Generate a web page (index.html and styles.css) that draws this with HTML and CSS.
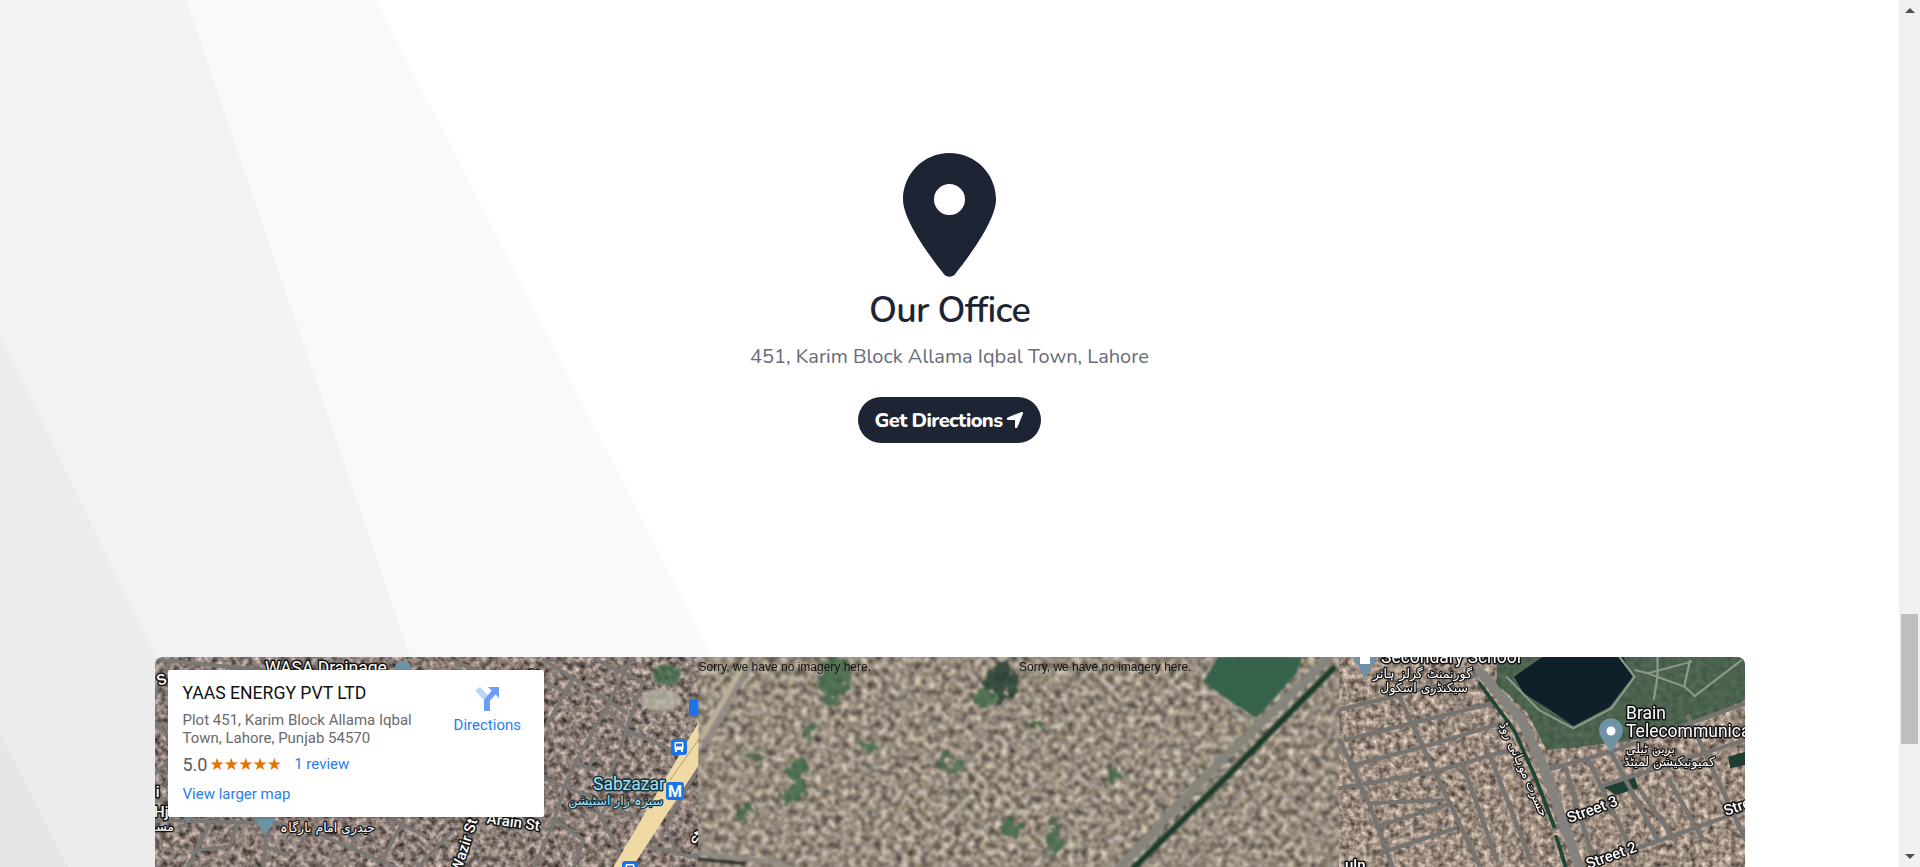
FILE: index.html
```html
<!DOCTYPE html>
<html lang="en">
<head>
<meta charset="utf-8">
<title>Our Office</title>
<link rel="stylesheet" href="styles.css">
</head>
<body>
<div class="window">
  <main class="page">
    <svg class="stripes" viewBox="0 0 1899 867" aria-hidden="true">
      <polygon class="s1" points="0,0 376,0 820,867 0,867"/>
      <polygon class="s2" points="0,0 186,0 482,867 0,867"/>
      <polygon class="s3" points="0,335 257,867 0,867"/>
      <polygon class="s4" points="0,733 68,867 0,867"/>
    </svg>

    <section class="office">
      <svg class="pin" viewBox="0 0 384 512" aria-hidden="true"><path d="M215.7 499.2C267 435 384 279.4 384 192C384 86 298 0 192 0S0 86 0 192c0 87.4 117 243 168.3 307.2c12.3 15.3 35.1 15.3 47.4 0zM192 128a64 64 0 1 1 0 128 64 64 0 1 1 0-128z"/></svg>
      <h2 class="title">Our Office</h2>
      <p class="address">451, Karim Block Allama Iqbal Town, Lahore</p>
      <a class="btn" href="#">Get Directions
        <svg class="btn-icon" viewBox="0 0 448 512" aria-hidden="true"><path d="M429.6 92.1c4.9-11.9 2.1-25.6-7-34.7s-22.8-11.9-34.7-7l-352 144c-14.2 5.8-22.2 20.8-19.3 35.8s16.1 25.8 31.4 25.8H224V432c0 15.3 10.8 28.4 25.8 31.4s30-5.1 35.8-19.3l144-352z"/></svg>
      </a>
    </section>

    <section class="map">
      <svg class="map-art" viewBox="0 0 1590 211" aria-label="Satellite map">
        <defs>
          <filter id="texLeft" x="0" y="0" width="100%" height="100%" color-interpolation-filters="sRGB">
            <feTurbulence type="fractalNoise" baseFrequency="0.16" numOctaves="3" seed="7"/>
            <feColorMatrix values="0.95 0 0 0 0.07  0.88 0 0 0 0.05  0.84 0.05 0 0 0.02  0 0 0 0 1"/>
            <feGaussianBlur stdDeviation="0.6"/>
          </filter>
          <filter id="texMid" x="0" y="0" width="100%" height="100%" color-interpolation-filters="sRGB">
            <feTurbulence type="fractalNoise" baseFrequency="0.15" numOctaves="3" seed="21"/>
            <feColorMatrix values="0.9 0 0.1 0 0.09  0.85 0 0.05 0 0.1  0.8 0 -0.05 0 0.12  0 0 0 0 1"/>
            <feGaussianBlur stdDeviation="0.8"/>
          </filter>
          <filter id="texRight" x="0" y="0" width="100%" height="100%" color-interpolation-filters="sRGB">
            <feTurbulence type="fractalNoise" baseFrequency="0.17" numOctaves="3" seed="33"/>
            <feColorMatrix values="0.92 0 0 0 0.15  0.86 0 0 0 0.12  0.8 0.04 0 0 0.08  0 0 0 0 1"/>
            <feGaussianBlur stdDeviation="0.6"/>
          </filter>
          <filter id="soft" x="-40%" y="-40%" width="180%" height="180%"><feGaussianBlur stdDeviation="3"/></filter>
          <filter id="softer" x="-30%" y="-30%" width="160%" height="160%"><feGaussianBlur stdDeviation="0.8"/></filter>
          <filter id="foliage" x="-20%" y="-20%" width="140%" height="140%" color-interpolation-filters="sRGB">
            <feTurbulence type="fractalNoise" baseFrequency="0.09" numOctaves="3" seed="5" result="n"/>
            <feDisplacementMap in="SourceGraphic" in2="n" scale="26" xChannelSelector="R" yChannelSelector="G"/>
            <feGaussianBlur stdDeviation="1.2"/>
          </filter>
        </defs>

        <svg x="0" y="0" width="544" height="211" viewBox="0 0 544 211">
          <rect width="544" height="211" filter="url(#texLeft)"/>
          <g class="patch" filter="url(#soft)" transform="translate(285,-6) scale(.3333)">
            <ellipse class="p-green" cx="680" cy="75" rx="42" ry="32"/>
            <ellipse class="p-pale" cx="665" cy="150" rx="60" ry="34"/>
          </g>
          <g class="road" transform="translate(285,-6) scale(.3333)">
            <polyline points="310,30 400,85 500,150 560,190"/>
            <polyline points="470,30 610,95 560,235"/>
            <polyline points="400,85 320,225"/>
            <polyline points="575,25 500,170 405,340 370,420 340,520 280,655"/>
            <polyline points="500,180 560,240 695,300"/>
            <polyline points="560,240 510,375"/>
            <polyline points="405,340 465,360"/>
            <polyline points="470,290 448,350"/>
            <polyline points="310,385 450,440 520,570 548,625"/>
            <polyline points="340,505 430,570 400,655"/>
            <polyline points="680,530 710,610"/>
            <polyline points="630,590 780,625"/>
            <polyline points="320,100 385,130"/>
            <polyline points="450,440 585,500"/>
            <polyline points="780,345 680,520"/>
          </g>
          <g class="road" transform="translate(-5,134) scale(.3333)">
            <polyline points="0,90 390,100 500,130 745,235"/>
            <polyline points="180,100 110,235"/>
            <polyline points="350,120 340,235"/>
            <polyline points="345,170 415,195"/>
            <polyline points="262,100 240,170 140,180"/>
            <polyline points="750,110 695,215"/>
            <polyline points="620,130 600,175"/>
            <polyline points="730,90 830,140"/>
            <polyline points="800,235 900,130"/>
          </g>
          <g class="road" transform="translate(-15,-16) scale(.3333)">
            <polyline points="60,60 370,90"/>
            <polyline points="45,160 90,60"/>
            <polyline points="50,250 90,300"/>
            <polyline points="45,400 90,360"/>
            <polyline points="950,70 1000,85"/>
          </g>
          <polygon class="highway" transform="translate(285,-6) scale(.3333)" points="780,210 780,340 575,655 518,655"/>
          <line class="road-thin" transform="translate(285,-6) scale(.3333)" x1="775" y1="270" x2="690" y2="390"/>

          <g class="poi">
            <rect x="516" y="83" width="16" height="16" rx="3"/>
            <rect x="534" y="43" width="14" height="17" rx="3"/>
            <rect x="467" y="205" width="16" height="16" rx="3"/>
            <rect x="511" y="126" width="18" height="18" rx="3"/>
          </g>
          <g class="bus">
            <rect x="519.5" y="86" width="9" height="8" rx="1.5"/>
            <rect x="520" y="94" width="2" height="2"/>
            <rect x="526" y="94" width="2" height="2"/>
            <rect x="470.5" y="208" width="9" height="8" rx="1.5"/>
          </g>
          <rect class="bus-window" x="521" y="87.5" width="6" height="3"/>
          <rect class="bus-window" x="472" y="209.5" width="6" height="2"/>
          <text class="poi-m" x="520" y="141">M</text>

          <path class="mini-pin" d="M110 179l-9-14a11 11 0 1 1 18 0z"/>
          <path class="mini-pin" d="M33 167l-6-10h12z"/>
          <circle class="mini-pin" cx="248" cy="14" r="9"/>

          <text class="lbl" x="110" y="18">WASA Drainage</text>
          <text class="lbl lbl-blue" x="438" y="134">Sabzazar</text>
          <text class="lbl lbl-ar lbl-blue" x="508" y="149" text-anchor="end">سبزہ زار اسٹیشن</text>
          <text class="lbl lbl-road" transform="translate(357.6,171) rotate(8)" text-anchor="middle">Arain St</text>
          <text class="lbl lbl-road" transform="translate(314,191) rotate(-72)" text-anchor="middle">Wazir St</text>
          <text class="lbl lbl-ar" x="220" y="176" text-anchor="end">حیدری امام بارگاہ</text>
          <text class="lbl lbl-road" x="-3" y="141">li</text>
          <text class="lbl lbl-road" x="-1" y="161">Hj</text>
          <text class="lbl lbl-ar" x="19" y="175" text-anchor="end">مسجد</text>
          <text class="lbl lbl-road" transform="translate(4,30) rotate(-20)">S</text>
          <text class="lbl lbl-road" transform="translate(370,17) rotate(50)">d</text>
          <text class="lbl lbl-road" transform="translate(546,190) rotate(-75)">St</text>
        </svg>

        <svg x="543" y="0" width="642" height="211" viewBox="543 0 642 211">
          <rect x="543" width="642" height="211" filter="url(#texMid)"/>
          <g class="veg" filter="url(#foliage)">
            <g transform="translate(405,-16) scale(.3827,.3333)">
              <ellipse class="p-green" cx="715" cy="115" rx="40" ry="70"/>
              <ellipse class="p-green" cx="620" cy="410" rx="22" ry="60"/>
              <ellipse class="p-green" cx="610" cy="470" rx="26" ry="26"/>
              <ellipse class="p-dark" cx="1150" cy="130" rx="38" ry="60"/>
              <ellipse class="p-green" cx="1105" cy="175" rx="26" ry="22"/>
              <ellipse class="p-green" cx="1180" cy="565" rx="22" ry="40"/>
              <ellipse class="p-green" cx="1000" cy="365" rx="20" ry="34"/>
              <ellipse class="p-green" cx="510" cy="350" rx="26" ry="15"/>
              <ellipse class="p-green" cx="800" cy="320" rx="20" ry="14"/>
              <ellipse class="p-green" cx="650" cy="270" rx="18" ry="18"/>
              <ellipse class="p-green" cx="1240" cy="265" rx="22" ry="14"/>
              <ellipse class="p-green" cx="1450" cy="410" rx="24" ry="22"/>
              <ellipse class="p-green" cx="1290" cy="590" rx="16" ry="70"/>
              <ellipse class="p-green" cx="1040" cy="385" rx="14" ry="16"/>
              <ellipse class="p-green" cx="480" cy="515" rx="20" ry="14"/>
            </g>
          </g>
          <g filter="url(#softer)">
            <polyline class="road-mid" transform="translate(405,-16) scale(.3827,.3333)" points="515,50 440,180 375,320"/>
            <polyline class="road-rail" transform="translate(405,-16) scale(.3827,.3333)" points="490,55 405,225 370,295"/>
            <polyline class="road-mid thin" transform="translate(405,-16) scale(.3827,.3333)" points="1160,190 1080,340 1000,470"/>
            <polyline class="road-mid thin" transform="translate(405,-16) scale(.3827,.3333)" points="950,70 880,190 820,290"/>
            <polyline class="road-mid" transform="translate(405,-16) scale(.3827,.3333)" points="365,640 560,665 620,690"/>
            <polyline class="road-black" transform="translate(405,-16) scale(.3827,.3333)" points="340,655 480,670"/>
            <polygon class="pond" transform="translate(845,-6) scale(.3333)" points="610,95 655,20 905,20 890,70 770,205 700,160"/>
            <polyline class="road-mid wide" transform="translate(845,-6) scale(.3333)" points="360,650 650,345 985,25"/>
            <polyline class="road-dark" transform="translate(845,-6) scale(.3333)" points="400,655 690,370 1000,55"/>
          </g>
          <text class="sorry" x="543.5" y="15">Sorry, we have no imagery here.</text>
          <text class="sorry" x="864" y="15">Sorry, we have no imagery here.</text>
        </svg>

        <svg x="1184" y="0" width="406" height="211" viewBox="1184 0 406 211">
          <rect x="1184" width="406" height="211" filter="url(#texRight)"/>
          <g transform="translate(1005,-16) scale(.3827,.3333)">
            <polygon class="park" points="880,50 1530,50 1530,180 1300,290 1100,320 1010,330 960,220 880,130"/>
            <polygon class="lake" points="925,110 1000,50 1210,50 1235,110 1175,200 1080,258 1020,210 950,160"/>
            <g class="path-light">
              <polyline points="905,110 990,210 1080,265 1180,205 1240,110 1200,50"/>
              <polyline points="1240,90 1275,100 1390,65"/>
              <polyline points="1275,100 1370,140 1400,170"/>
              <polyline points="1385,60 1370,140"/>
              <polyline points="1300,50 1300,110 1290,180"/>
              <polyline points="1395,170 1520,60"/>
            </g>
            <polygon class="p-dark" points="1155,435 1240,410 1250,445 1190,465"/>
            <polygon class="p-dark" points="1485,350 1530,335 1530,375 1490,385"/>
            <g class="road wide-road">
              <polyline points="467,210 850,100"/>
              <polyline points="485,300 690,240 870,190"/>
              <polyline points="510,375 720,310 890,250"/>
              <polyline points="467,445 720,395 910,330"/>
              <polyline points="550,490 740,480"/>
              <polyline points="565,560 760,490"/>
              <polyline points="575,640 770,565"/>
              <polyline points="625,170 720,400 840,690"/>
              <polyline points="470,300 550,500 610,690"/>
              <polyline points="790,370 880,660"/>
              <polyline points="860,340 970,665"/>
              <polyline points="1000,395 1190,330 1530,190"/>
              <polyline points="1060,385 1130,650"/>
              <polyline points="1120,360 1240,650"/>
              <polyline points="1180,340 1300,600"/>
              <polyline points="1260,460 1340,590"/>
              <polyline points="1330,420 1420,600"/>
              <polyline points="1380,230 1530,600"/>
              <polyline points="1150,440 1530,300"/>
              <polyline points="1030,565 1160,510"/>
              <polyline points="1260,620 1530,510"/>
              <polyline points="1110,670 1260,620"/>
            </g>
            <polyline class="road-main" points="835,95 945,240 1005,390 1095,680"/>
            <polyline class="road-green" points="835,130 925,270 980,410 1030,560"/>
            <polyline class="road-green" points="1035,590 1060,680"/>
          </g>

          <path class="mini-pin" d="M1210 22l-10-17a12 12 0 1 1 20 0z"/>
          <rect class="mini-white" x="1205" y="1" width="10" height="7"/>
          <path class="mini-pin" d="M1456 96l-10-15a12 12 0 1 1 20 0z"/>
          <circle class="mini-white" cx="1456" cy="75" r="4.5"/>

          <text class="lbl" x="1226" y="7">Secondary School</text>
          <text class="lbl lbl-ar" x="1317" y="22" text-anchor="end">گورنمنٹ گرلز ہائر</text>
          <text class="lbl lbl-ar" x="1313" y="36" text-anchor="end">سیکنڈری اسکول</text>
          <text class="lbl" x="1471" y="63">Brain</text>
          <text class="lbl" x="1471" y="81">Telecommunications</text>
          <text class="lbl lbl-ar" x="1520" y="97" text-anchor="end">برین ٹیلی</text>
          <text class="lbl lbl-ar" x="1560" y="110" text-anchor="end">کمیونیکیشن لمیٹڈ</text>
          <text class="lbl lbl-ar" transform="translate(1365,115) rotate(66)" text-anchor="middle">حسرت موہانی روڈ</text>
          <text class="lbl lbl-road" transform="translate(1439,158) rotate(-20)" text-anchor="middle">Street 3</text>
          <text class="lbl lbl-road" transform="translate(1458,204) rotate(-20)" text-anchor="middle">Street 2</text>
          <text class="lbl lbl-road" transform="translate(1571,160) rotate(-20)">Street</text>
          <text class="lbl lbl-road" x="1190" y="214">uln</text>
        </svg>
      </svg>

      <aside class="place-card">
        <div class="place-main">
          <div class="place-name">YAAS ENERGY PVT LTD</div>
          <div class="place-addr">Plot 451, Karim Block Allama Iqbal Town, Lahore, Punjab 54570</div>
          <div class="place-rating">
            <span class="score">5.0</span>
            <span class="stars">★★★★★</span>
            <a class="link review" href="#">1 review</a>
          </div>
          <a class="link larger" href="#">View larger map</a>
        </div>
        <a class="dir" href="#">
          <svg class="dir-icon" viewBox="0 0 24 24" aria-hidden="true">
            <polygon class="dir-light" points="0,3.5 5,0 13,8.5 9,13"/>
            <polygon class="dir-dark" points="13,0 24,0 24,11 20.6,7.6 15,13.5 15,24 9,24 9,13 16.6,3.6"/>
          </svg>
          <span class="link">Directions</span>
        </a>
      </aside>
    </section>
  </main>

  <div class="scrollbar" aria-hidden="true">
    <div class="sb-btn"><span class="arrow-up"></span></div>
    <div class="sb-thumb"></div>
    <div class="sb-fill"></div>
    <div class="sb-btn"><span class="arrow-down"></span></div>
  </div>
</div>
</body>
</html>
```
FILE: styles.css
```css
* { box-sizing: border-box; }
html, body { margin: 0; height: 867px; overflow: hidden; background: #fff; }

.window { display: flex; height: 867px; }
.page {
  position: relative;
  flex: 1;
  min-width: 0;
  overflow: hidden;
  background: #fff;
  font-family: "Nunito", "Lato", sans-serif;
}

.stripes { position: absolute; inset: 0; width: 1899px; height: 867px; }
.s1 { fill: #f9f9f9; }
.s2 { fill: #f2f2f2; }
.s3 { fill: #ececec; }
.s4 { fill: #e6e6e6; }

.office {
  position: relative;
  display: flex;
  flex-direction: column;
  align-items: center;
  padding-top: 153px;
}
.pin { display: block; width: 93px; height: 124px; fill: #1d2433; }
.title {
  margin: 14px 0 0;
  font-size: 36px;
  line-height: 40px;
  font-weight: 600;
  letter-spacing: -.7px;
  color: #1d2433;
}
.address {
  margin: 12px 0 0;
  font-size: 20px;
  line-height: 28px;
  color: #666c78;
}
.btn {
  display: flex;
  align-items: center;
  gap: 4px;
  height: 46px;
  margin-top: 26px;
  padding: 0 17px;
  border-radius: 23px;
  background: #1d2433;
  color: #fff;
  font-size: 20px;
  font-weight: 800;
  letter-spacing: -.6px;
  text-decoration: none;
}
.btn-icon { width: 18px; height: 20px; fill: #fff; }

.map {
  position: relative;
  height: 260px;
  margin: 214px 154px 0 155px;
  border-radius: 8px 8px 0 0;
  overflow: hidden;
  background: #8f8378;
}
.map-art { display: block; width: 1590px; height: 211px; margin-top: -1px; }

.road polyline, .road-thin { fill: none; stroke: #7a7875; stroke-width: 11; stroke-linecap: round; stroke-linejoin: round; }
.wide-road polyline { stroke: #757471; stroke-width: 12; }
.road-thin { stroke: #8b7d5b; stroke-width: 2; }
.highway { fill: #efd9a4; }
.p-green { fill: #3f6a47; }
.p-pale { fill: #b9b8a6; }
.p-dark { fill: #1f3d30; }
.patch { opacity: .75; }
.veg { opacity: .8; }
.pond { fill: #35624c; }
.road-mid, .road-rail, .road-dark, .road-black, .road-main, .road-green { fill: none; stroke-linecap: round; }
.road-mid { stroke: #8f8c86; stroke-width: 12; }
.road-mid.thin { stroke-width: 7; opacity: .6; }
.road-mid.wide { stroke: #85857e; stroke-width: 26; }
.road-rail { stroke: #bdb197; stroke-width: 14; }
.road-dark { stroke: #1b3b2a; stroke-width: 18; }
.road-black { stroke: #2f2c2e; stroke-width: 10; }
.park { fill: #3c5a45; opacity: .85; }
.lake { fill: #0e2029; }
.path-light polyline { fill: none; stroke: #8d9a88; stroke-width: 6; }
.road-main { stroke: #85837f; stroke-width: 26; }
.road-green { stroke: #1f4635; stroke-width: 10; }

.poi rect { fill: #1a73e8; }
.bus rect { fill: #fff; }
.bus-window { fill: #1a73e8; }
.poi-m { fill: #fff; font: 700 16px "Roboto", sans-serif; text-anchor: middle; }
.mini-pin { fill: #6f93a6; }
.mini-white { fill: #fff; }

.lbl {
  fill: #fff;
  stroke: #141414;
  stroke-width: 3px;
  stroke-linejoin: round;
  paint-order: stroke;
  font-family: "Roboto", "Noto Sans", sans-serif;
  font-size: 17.5px;
}
.lbl-blue { fill: #a6e1f2; stroke: #17323c; }
.lbl-ar { font-family: "DejaVu Sans", "Noto Sans", sans-serif; font-size: 12.5px; stroke-width: 2.5px; }
.lbl-road { font-size: 15px; font-weight: 500; }
.sorry { font-family: "Liberation Sans", sans-serif; font-size: 12px; fill: #141414; }

.place-card {
  position: absolute;
  top: 13px;
  left: 13px;
  display: flex;
  justify-content: space-between;
  width: 376px;
  height: 147px;
  padding: 12px 23px 0 14.5px;
  background: #fff;
  border-radius: 2px;
  box-shadow: 0 1px 4px -1px rgba(0,0,0,.3);
  font-family: "Roboto", sans-serif;
}
.place-main { width: 240px; }
.place-name { font-size: 17.6px; line-height: 22px; font-weight: 400; color: #111; white-space: nowrap; }
.place-addr { margin-top: 7px; font-size: 15px; line-height: 18px; color: #6a6a6a; }
.place-rating { display: flex; align-items: center; margin-top: 5px; height: 24px; }
.score { font-size: 18px; color: #5b5b5b; }
.stars { margin-left: 2px; font-family: "DejaVu Sans", sans-serif; font-size: 17px; line-height: 1; letter-spacing: -.9px; color: #e37400; }
.link { color: #2a7de9; font-size: 15px; text-decoration: none; }
.review { margin-left: 13px; }
.larger { display: block; margin-top: 8px; line-height: 20px; }
.dir { display: flex; flex-direction: column; align-items: center; gap: 5px; padding-top: 5px; text-decoration: none; }
.dir-icon { display: block; width: 24px; height: 24px; }
.dir-light { fill: #bcd2fb; }
.dir-dark { fill: #6e9df7; }

.scrollbar { display: flex; flex-direction: column; flex: 0 0 21px; background: #f1f1f1; }
.sb-btn { display: flex; align-items: center; justify-content: center; flex: 0 0 21px; }
.sb-thumb { flex: 0 0 130px; margin: 593px 2px 0; background: #bebebe; }
.sb-fill { flex: 1; }
.arrow-up, .arrow-down { width: 0; height: 0; border-left: 5px solid transparent; border-right: 5px solid transparent; }
.arrow-up { border-bottom: 5px solid #505050; }
.arrow-down { border-top: 5px solid #505050; }
```
